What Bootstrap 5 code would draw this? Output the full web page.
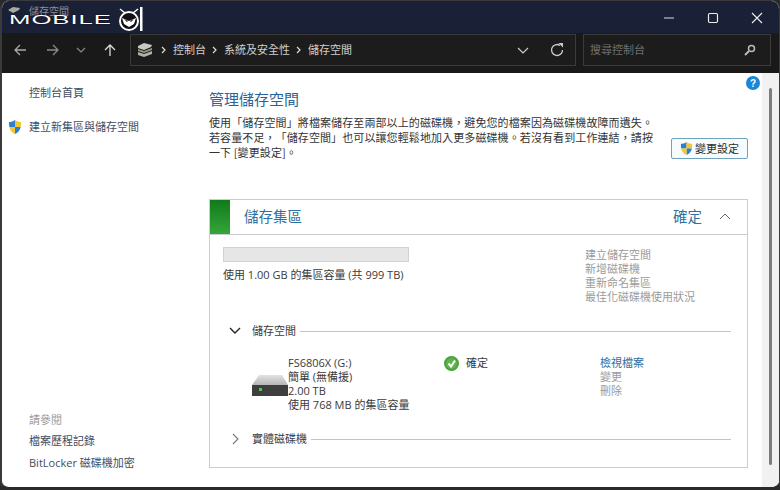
<!DOCTYPE html>
<html lang="zh-Hant">
<head>
<meta charset="utf-8">
<title>儲存空間</title>
<link rel="stylesheet" href="https://cdn.jsdelivr.net/npm/bootstrap@5.3.0/dist/css/bootstrap.min.css">
<style>
html,body{width:780px;height:490px;overflow:hidden;background:#2a2a2a}
body{font-family:"Open Sans","Noto Sans CJK TC",sans-serif;font-size:11px;line-height:14px;color:#3a3a3a;text-spacing-trim:space-all}
.win{position:relative;width:780px;height:490px;display:flex;flex-direction:column;border-radius:9px;overflow:hidden;background:#fff;border:1px solid #3a3a3c;border-bottom:3px solid #2b2b2b;border-left-width:2px}
.tbar{height:32px;background:#1a2035;flex:none;display:flex;justify-content:flex-end;align-items:center;color:#e8e8e8;padding-top:1px}
.ctl{width:44px;display:flex;justify-content:center}
.title-ic{position:absolute;left:6px;top:6px}
.title-txt{position:absolute;left:27px;top:3px;color:#8b8f9c;font-size:10px}
.logo{position:absolute;left:7px;top:5px;display:flex;align-items:center}
.logo-word{color:#fff;font-family:"Liberation Sans",sans-serif;font-size:14px;line-height:14px;letter-spacing:.5px;transform-origin:0 50%;transform:scale(1.84,.86);width:107px;margin-top:2px;text-shadow:0 0 1px #000}
.tools{height:40px;background:#191919;flex:none;display:flex;align-items:flex-start;color:#c9c9c9;padding-left:1px}
.tb-ic{display:flex;justify-content:center;align-items:center;height:32px;margin-top:1px;width:33px}
.addr{height:32px;margin-top:1px;width:446px;margin-left:4px;border:1px solid #3b3b3b;background:#1c1c1c;display:flex;align-items:center;padding-left:6px;color:#d0d0d0;font-size:11px}
.crumb{margin:0 6px 0 0}
.sep{color:#ddd;margin-right:6px;display:flex}
.srch{height:32px;margin-top:1px;width:188px;margin-left:7px;border:1px solid #3b3b3b;background:#1c1c1c;display:flex;align-items:center;justify-content:space-between;padding:0 14px 0 6px;color:#6f6f6f}
.work{flex:1;display:flex;min-height:0}
.side{width:207px;flex:none;display:flex;flex-direction:column;padding-left:27px;color:#434d60}
.side-item{height:14px;position:relative}
.shield-pos{position:absolute;left:-22px;top:-1px}
.main{flex:1;padding-top:16px;position:relative;min-width:0}
.help{position:absolute;right:2px;top:3px;display:flex}
.h-title{color:#2a6497;font-size:15px;line-height:20px;margin:0 0 6px}
.intro{display:flex;width:539px;color:#333;line-height:15px;align-items:flex-start}
.intro p{width:458px;margin:0;flex:none;letter-spacing:.1px;white-space:nowrap;font-family:"Noto Sans CJK TC",sans-serif}
.chg{margin-left:4px;margin-top:23px;width:77px;height:21px;border:1px solid #6ea2bd;border-radius:2px;background:#f6fbfd;display:flex;align-items:center;padding-left:7px;gap:1px;color:#2c2c2c}
.panel{margin-top:39px;width:539px;height:269px;border:1px solid #ccc;display:flex;flex-direction:column}
.p-head{height:35px;border-bottom:1px solid #ccc;display:flex;align-items:center;flex:none;color:#2f709f;font-size:14.5px}
.green{width:20px;height:34px;background:linear-gradient(#117a1c,#35a63a);margin-right:14px}
.ok-txt{margin-left:auto;margin-right:17px}
.p-body{padding:12px 16px 0 13px;flex:1}
.pool{display:flex}
.pool-l{width:362px;flex:none}
.bar-e{width:186px;height:15px;background:#e6e6e6;border:1px solid #d2d2d2;margin-bottom:6px}
.mute{color:#9b9b9b}
.pool-r{line-height:14px;padding-top:1px}
.sect{display:flex;align-items:center;gap:8px;color:#3a3a3a}
.sect-ar{width:20px;margin-right:-1px;margin-left:2px;display:flex;justify-content:center}
.rule-x{flex:1;height:1px;background:#c4c4c4;margin-top:1px;margin-left:-4px}
.vol{display:flex;margin-top:18px;padding-left:29px}
.disk{width:36px;flex:none;padding-top:19px;display:flex;align-items:flex-start}
.v-info{width:156px;flex:none;white-space:nowrap}
.v-stat{width:156px;flex:none;display:flex;gap:7px;align-items:flex-start}
.lnk{color:#2d6fa3}
.v-acts{line-height:14px}
.scroll{width:17px;flex:none;background:#f1f1f1;display:flex;justify-content:center;padding-top:15px;padding-bottom:22px}
.thumb{width:3px;background:#7d7d7d;border-radius:2px;height:100%}
</style>
</head>
<body>
<div class="win">
  <div class="tbar">
    <div class="ctl"><svg width="12" height="12"><path d="M1 6h10" stroke="#ddd" stroke-width="1.2"/></svg></div>
    <div class="ctl"><svg width="12" height="12"><rect x="1.500" y="1.500" width="9" height="9" rx="1.200" fill="none" stroke="#eee" stroke-width="1.200"/></svg></div>
    <div class="ctl"><svg width="12" height="12"><path d="M1 1l10 10M11 1L1 11" stroke="#eee" stroke-width="1.100"/></svg></div>
  </div>
  <svg class="title-ic" width="12" height="8" viewBox="0 0 12 8"><path d="M0 3l5-3 7 1-1 2-6 3z" fill="#a8a8a0"/></svg>
  <span class="title-txt">儲存空間</span>
  <div class="logo">
    <span class="logo-word">MOBILE</span>
    <svg width="30" height="26" viewBox="0 0 30 26">
      <path d="M4 3l5 4M22 3l-5 4" stroke="#fff" stroke-width="1.500"/>
      <circle cx="13" cy="15" r="9" fill="#111" stroke="#fff" stroke-width="2"/>
      <path d="M6 12l7 3 7-3-2 6-5 3-5-3z" fill="#fff"/>
      <path d="M8 13l4 2-1 1zM18 13l-4 2 1 1z" fill="#111"/>
      <rect x="24" y="1" width="2.500" height="24" fill="#fff"/>
    </svg>
  </div>
  <div class="tools">
    <div class="tb-ic"><svg width="14" height="14"><path d="M13 7H2M7 2L2 7l5 5" fill="none" stroke="#a8a8a8" stroke-width="1.300"/></svg></div>
    <div class="tb-ic"><svg width="14" height="14"><path d="M1 7h11M7 2l5 5-5 5" fill="none" stroke="#8a8a8a" stroke-width="1.300"/></svg></div>
    <div class="tb-ic" style="width:24px"><svg width="10" height="10"><path d="M1 3l4 4 4-4" fill="none" stroke="#8a8a8a" stroke-width="1.200"/></svg></div>
    <div class="tb-ic"><svg width="14" height="14"><path d="M7 13V2M2 7l5-5 5 5" fill="none" stroke="#ddd" stroke-width="1.300"/></svg></div>
    <div class="addr">
      <svg width="16" height="16" viewBox="0 0 16 16" class="me-2 flex-none">
        <path d="M1 4l6-3 8 2-1 2-7 3-6-2z" fill="#c9c9c2"/><path d="M1 7l6 2 8-3v2l-8 3-6-2z" fill="#8d9a84"/><path d="M1 10l6 2 8-3v3l-8 3-6-2z" fill="#b1b1aa"/>
      </svg>
      <span class="sep"><svg width="6" height="10"><path d="M1 2l3 3-3 3" fill="none" stroke="#ddd" stroke-width="1.200"/></svg></span>
      <span class="crumb">控制台</span>
      <span class="sep"><svg width="6" height="10"><path d="M1 2l3 3-3 3" fill="none" stroke="#ddd" stroke-width="1.200"/></svg></span>
      <span class="crumb">系統及安全性</span>
      <span class="sep"><svg width="6" height="10"><path d="M1 2l3 3-3 3" fill="none" stroke="#ddd" stroke-width="1.200"/></svg></span>
      <span class="crumb">儲存空間</span>
      <svg width="12" height="12" class="ms-auto"><path d="M1 4l5 5 5-5" fill="none" stroke="#ccc" stroke-width="1.200"/></svg>
      <svg width="16" height="16" viewBox="0 0 16 16" style="margin:0 10px 0 20px"><path d="M13.500 8A5.500 5.500 0 1 1 11 3.400" fill="none" stroke="#ccc" stroke-width="1.300"/><path d="M9.500 1h4.500v4.500z" fill="#ccc"/></svg>
    </div>
    <div class="srch">
      <span>搜尋控制台</span>
      <svg width="12" height="12" viewBox="0 0 12 12"><circle cx="7.500" cy="4.500" r="3" fill="none" stroke="#bbb" stroke-width="1.500"/><path d="M5 7l-4 4" stroke="#bbb" stroke-width="2"/></svg>
    </div>
  </div>
  <div class="work">
    <div class="side">
      <div class="side-item" style="margin-top:13px">控制台首頁</div>
      <div class="side-item" style="margin-top:20px">
        <svg class="shield-pos" width="16" height="16" viewBox="0 0 16 16"><path d="M8 1C6 2.500 4 3 2 3c0 2 .1 3.500.3 5H8z" fill="#2f7fd0"/><path d="M8 1c2 1.500 4 2 6 2 0 2-.1 3.500-.3 5H8z" fill="#f4c62f"/><path d="M8 8h5.700C13 11 11.500 13.500 8 15z" fill="#2f7fd0"/><path d="M8 8H2.300C3 11 4.500 13.500 8 15z" fill="#f4c62f"/></svg>
        建立新集區與儲存空間
      </div>
      <div class="side-item mute mt-auto">請參閱</div>
      <div class="side-item" style="margin-top:7px">檔案歷程記錄</div>
      <div class="side-item" style="margin-top:8px;margin-bottom:17px">BitLocker 磁碟機加密</div>
    </div>
    <div class="main">
      <svg class="help" width="14" height="14" viewBox="0 0 14 14"><circle cx="7" cy="7" r="7" fill="#1a86d6"/><text x="7" y="10.500" font-size="10" font-weight="700" text-anchor="middle" fill="#fff" font-family="Liberation Sans">?</text></svg>
      <h1 class="h-title fw-normal">管理儲存空間</h1>
      <div class="intro">
        <p>使用「儲存空間」將檔案儲存至兩部以上的磁碟機，避免您的檔案因為磁碟機故障而遺失。<br>若容量不足，「儲存空間」也可以讓您輕鬆地加入更多磁碟機。若沒有看到工作連結，請按<br>一下 [變更設定]。</p>
        <div class="chg"><svg width="15" height="15" viewBox="0 0 16 16" class="flex-none"><path d="M8 1C6 2.500 4 3 2 3c0 2 .1 3.500.3 5H8z" fill="#2f7fd0"/><path d="M8 1c2 1.500 4 2 6 2 0 2-.1 3.500-.3 5H8z" fill="#f4c62f"/><path d="M8 8h5.700C13 11 11.500 13.500 8 15z" fill="#2f7fd0"/><path d="M8 8H2.300C3 11 4.500 13.500 8 15z" fill="#f4c62f"/></svg>變更設定</div>
      </div>
      <section class="panel">
        <div class="p-head">
          <div class="green"></div>
          <span>儲存集區</span>
          <span class="ok-txt">確定</span>
          <svg width="12" height="12" style="margin-right:16px"><path d="M1 8l5-5 5 5" fill="none" stroke="#666" stroke-width="1"/></svg>
        </div>
        <div class="p-body">
          <div class="pool">
            <div class="pool-l">
              <div class="bar-e"></div>
              <div>使用 1.00 GB 的集區容量 (共 999 TB)</div>
            </div>
            <div class="pool-r mute">建立儲存空間<br>新增磁碟機<br>重新命名集區<br>最佳化磁碟機使用狀況</div>
          </div>
          <div class="sect" style="margin-top:20px">
            <span class="sect-ar"><svg width="12" height="10"><path d="M1 2l5 5 5-5" fill="none" stroke="#222" stroke-width="1.400"/></svg></span>
            <span>儲存空間</span><span class="rule-x"></span>
          </div>
          <div class="vol">
            <div class="disk"><svg width="36" height="21" viewBox="0 0 36 21"><defs><linearGradient id="dk" x1="0" y1="0" x2="0" y2="1"><stop offset="0" stop-color="#e2e2e2"/><stop offset="1" stop-color="#b5b5b5"/></linearGradient></defs><path d="M7 0h23l6 10H0z" fill="url(#dk)"/><rect y="10" width="36" height="11" fill="#3e3e3e"/><rect x="7" y="13" width="3" height="3" fill="#3bd24a"/></svg></div>
            <div class="v-info">FS6806X (G:)<br>簡單 (無備援)<br>2.00 TB<br>使用 768 MB 的集區容量</div>
            <div class="v-stat"><svg width="15" height="15" viewBox="0 0 15 15" class="flex-none"><circle cx="7.500" cy="7.500" r="7.500" fill="#4ba03e"/><circle cx="7.500" cy="7.500" r="5.500" fill="#5fb54a"/><path d="M4.500 7.500l2.500 3 4-6" fill="none" stroke="#fff" stroke-width="2"/></svg><span>確定</span></div>
            <div class="v-acts"><span class="lnk">檢視檔案</span><br><span class="mute">變更</span><br><span class="mute">刪除</span></div>
          </div>
          <div class="sect" style="margin-top:20px">
            <span class="sect-ar"><svg width="10" height="12"><path d="M3 1l5 5-5 5" fill="none" stroke="#777" stroke-width="1.100"/></svg></span>
            <span>實體磁碟機</span><span class="rule-x"></span>
          </div>
        </div>
      </section>
    </div>
    <div class="scroll"><div class="thumb"></div></div>
  </div>
</div>
<script src="https://cdn.jsdelivr.net/npm/bootstrap@5.3.0/dist/js/bootstrap.bundle.min.js"></script>
</body>
</html>
